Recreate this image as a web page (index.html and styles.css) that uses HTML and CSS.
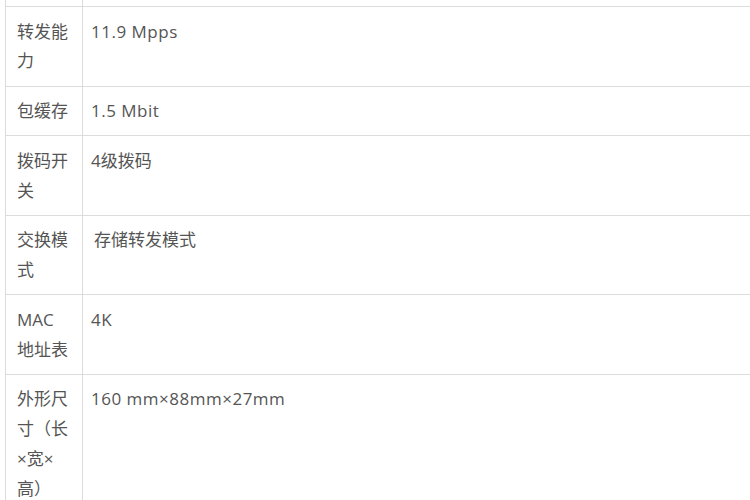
FILE: index.html
```html
<!DOCTYPE html>
<html lang="zh-CN">
<head>
<meta charset="utf-8">
<title>参数</title>
<link rel="stylesheet" href="styles.css">
</head>
<body>
<table class="spec">
  <tr class="stub"><td class="k"></td><td class="v"></td></tr>
  <tr><td class="k">转发能力</td><td class="v"><span class="latin">11.9 Mpps</span></td></tr>
  <tr><td class="k">包缓存</td><td class="v"><span class="latin">1.5 Mbit</span></td></tr>
  <tr><td class="k">拨码开关</td><td class="v">4级拨码</td></tr>
  <tr><td class="k">交换模式</td><td class="v"><span class="indent">存储转发模式</span></td></tr>
  <tr><td class="k">MAC 地址表</td><td class="v"><span class="latin">4K</span></td></tr>
  <tr><td class="k">外形尺寸（长×宽×高）</td><td class="v"><span class="latin">160 mm×88mm×27mm</span></td></tr>
</table>
</body>
</html>
```
FILE: styles.css
```css
html, body {
  margin: 0;
  padding: 0;
  background: #fff;
  overflow: hidden;
}
body {
  padding-left: 5px;
  font-family: "Open Sans", "Noto Sans CJK SC", sans-serif;
  font-size: 17px;
  color: #555;
}
.spec {
  border-collapse: collapse;
  width: 745px;
}
.spec td {
  border: 1px solid #dcdcdc;
  line-height: 29.75px;
  padding: 9.5px 0;
  vertical-align: top;
}
.spec .k {
  width: 54px;
  padding-left: 11px;
  padding-right: 11px;
}
.spec .v {
  padding-left: 8px;
  border-right: none;
}
.spec .stub td {
  border-top: none;
  height: 6px;
  padding: 0;
  line-height: 6px;
}
.latin {
  letter-spacing: 0.5px;
}
.indent {
  padding-left: 3px;
}
```
